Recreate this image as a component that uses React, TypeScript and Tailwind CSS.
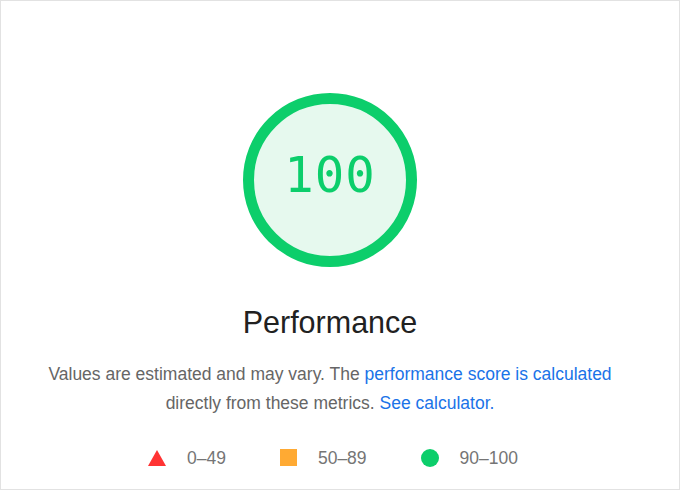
import React from 'react';

export default function App() {
  const legend = [
    { label: '0–49', shape: 'triangle' },
    { label: '50–89', shape: 'square' },
    { label: '90–100', shape: 'circle' },
  ];

  return (
    <div className="w-[680px] h-[490px] bg-white border border-[#e2e2e2] pr-[20px] flex flex-col items-center font-['Liberation_Sans',Arial,sans-serif]">
      {/* gauge */}
      <div className="mt-[92px] w-[174px] h-[174px] rounded-full border-[11px] border-[#0cce6b] bg-[#e6f9ee] flex items-center justify-center">
        <span className="-mt-[9px] font-['DejaVu_Sans_Mono',monospace] text-[49px] leading-none text-[#0cce6b] tracking-[1px]">100</span>
      </div>

      <h2 className="mt-[40px] text-[30.5px] leading-none text-[#212121]">Performance</h2>

      <p className="mt-[22px] text-[17.5px] leading-[29px] text-[#666666] text-center">
        Values are estimated and may vary. The{' '}
        <span className="text-[#1a73e8]">performance score is calculated</span>
        <br />
        directly from these metrics.{' '}
        <span className="text-[#1a73e8]">See calculator.</span>
      </p>

      <div className="mt-[27px] ml-[6px] flex items-center gap-[54px] text-[17.5px] text-[#757575]">
        {legend.map((item) => (
          <div key={item.label} className="flex items-center gap-[21px]">
            {item.shape === 'triangle' && (
              <svg width="18" height="16" viewBox="0 0 18 16">
                <polygon points="9,0 18,16 0,16" fill="#ff3333" />
              </svg>
            )}
            {item.shape === 'square' && <div className="w-[17px] h-[17px] bg-[#ffaa33]" />}
            {item.shape === 'circle' && <div className="w-[18px] h-[18px] rounded-full bg-[#0cce6b]" />}
            <span>{item.label}</span>
          </div>
        ))}
      </div>
    </div>
  );
}
